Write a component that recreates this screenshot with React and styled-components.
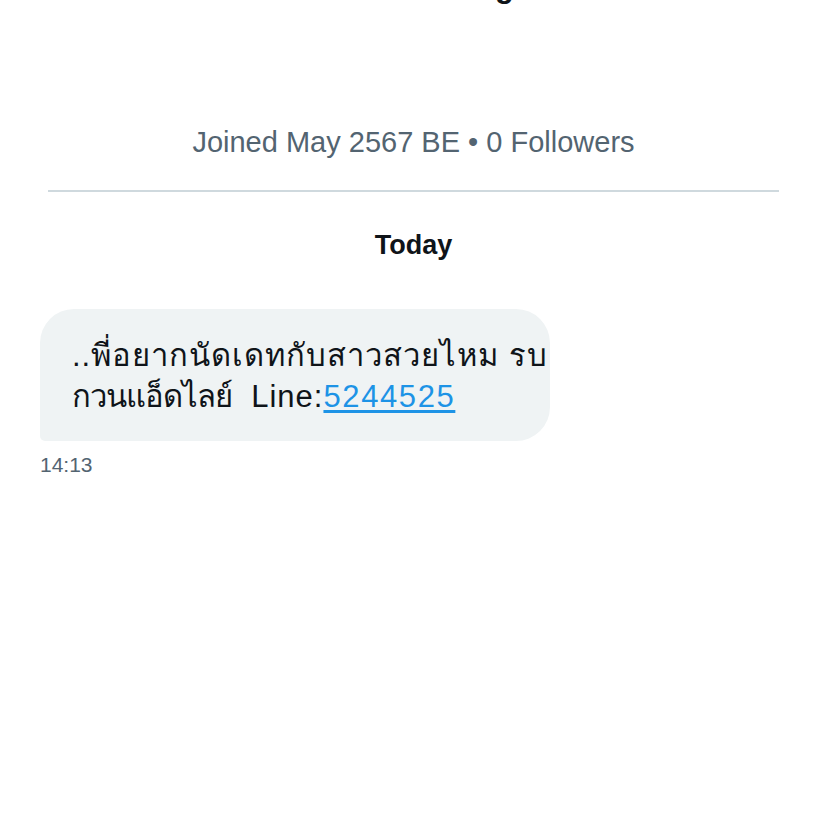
import React from "react";
import styled, { createGlobalStyle } from "styled-components";

const Global = createGlobalStyle`
  html, body { margin: 0; padding: 0; background: #ffffff; }
  body { font-family: "Liberation Sans", "Noto Sans", sans-serif; overflow: hidden; }
`;

const Page = styled.div`
  width: 827px;
  height: 827px;
  box-sizing: border-box;
  padding: 0 40px;
  display: flex;
  flex-direction: column;
  overflow: hidden;
`;

const Name = styled.h1`
  margin: -31px 0 0;
  text-align: center;
  font-size: 31px;
  line-height: 36px;
  font-weight: 700;
  color: #0f1419;
  padding-left: 34px;
`;

const Meta = styled.div`
  margin-top: 120px;
  text-align: center;
  font-size: 29px;
  line-height: 34px;
  color: #536471;
`;

const Divider = styled.hr`
  margin: 31px 8px 0;
  border: 0;
  border-top: 2px solid #cfd9de;
`;

const DayLabel = styled.div`
  margin-top: 38px;
  text-align: center;
  font-size: 27px;
  line-height: 30px;
  font-weight: 700;
  color: #0f1419;
`;

const Bubble = styled.div`
  margin-top: 49px;
  width: 510px;
  box-sizing: border-box;
  padding: 26px 20px 24px 32px;
  background: #eff3f4;
  border-radius: 34px 34px 34px 5px;
  font-size: 31px;
  line-height: 41px;
  letter-spacing: 1px;
  white-space: nowrap;
  color: #0f1419;
`;

const Tight = styled.span`
  letter-spacing: -1px;
`;

const Link = styled.a`
  color: #1d93e6;
  text-decoration: underline;
  text-underline-offset: 3px;
  letter-spacing: 1.6px;
`;

const Time = styled.div`
  margin-top: 12px;
  font-size: 21px;
  line-height: 24px;
  color: #536471;
`;

export default function App() {
  return (
    <>
      <Global />
      <Page>
        <Name>Mook Song</Name>
        <Meta>Joined May 2567 BE • 0 Followers</Meta>
        <Divider />
        <DayLabel>Today</DayLabel>
        <Bubble>
          ..พี่อยากนัดเดทกับสาวสวยไหม รบ
          <br />
          <Tight>กวนแอ็ดไลย์</Tight>&nbsp; Line:<Link href="#">5244525</Link>
        </Bubble>
        <Time>14:13</Time>
      </Page>
    </>
  );
}
